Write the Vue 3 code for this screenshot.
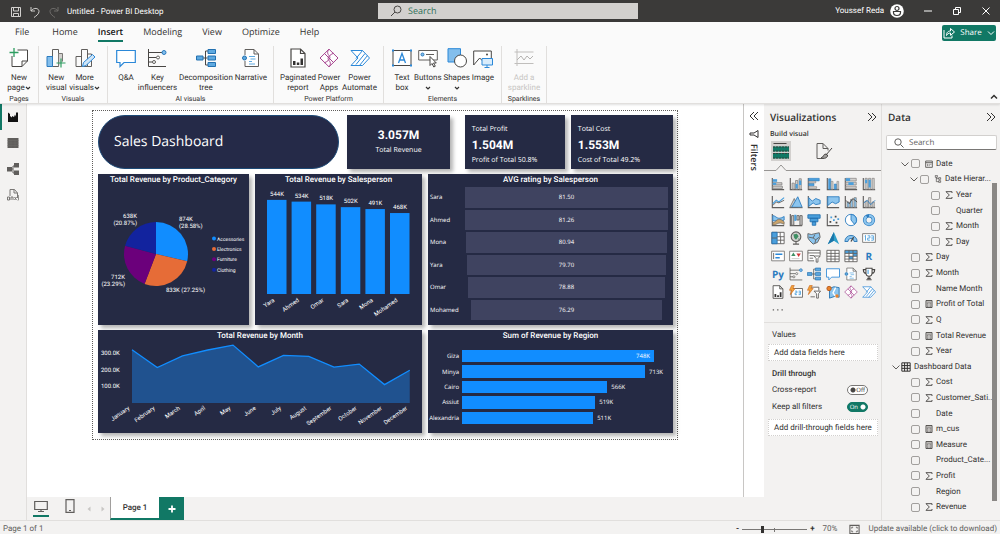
<script setup>
const tabs = ['File', 'Home', 'Insert', 'Modeling', 'View', 'Optimize', 'Help']

const glyph = {
  newPage: '<path d="M3 8v10.500h10l5.500-5.500V2H8.500M13 18.500V13h5.500" fill="#fff" stroke="#484644"/><path d="M5 0v9M.500 4.500h9" stroke="#2f9e62" stroke-width="1.300"/>',
  newVisual: '<path d="M6.500 18.500V1.500h6v17z" fill="#fafafa" stroke="#605e5c"/><path d="M12.500 18.500V5.500h4v8" fill="#d2d0ce" stroke="#797775"/><path d="M1 18.500V8.500h5.500v10z" fill="#83beec" stroke="#2b7bbf"/><path d="M15 10.500v9M10.500 15h9" stroke="#2f9e62" stroke-width="1.200"/>',
  moreVisuals: '<path d="M6.500 18.500V1.500h6v17zM12.500 18.500V6h4v12.500zM1 18.500V8.500h5.500v10z" fill="#fafafa" stroke="#605e5c"/><path d="M7.500 18.500l1-4L17.500 6.500l2.500 2.500-9 8.500z" fill="#cfe5f7" stroke="#2b88d8"/>',
  qa: '<path d="M.700 2.500h18.600v12H8L4 18.500v-4H.700z" fill="#fff" stroke="#2b88d8" stroke-width="1.200"/>',
  key: '<path d="M1.500 1v17.500H19M1.500 4.500H16M1.500 9.500h8M1.500 14h5" stroke="#484644" fill="none"/><circle cx="17" cy="4.500" r="2" fill="#83beec" stroke="#2b7bbf"/><circle cx="11" cy="9.500" r="1.500" fill="#fff" stroke="#605e5c"/><circle cx="7" cy="14" r="1.500" fill="#fff" stroke="#605e5c"/>',
  tree: '<path d="M7 10h4.500M9.500 3v14M9.500 3H12M9.500 17H12" stroke="#484644" fill="none"/><path d="M.500 8h6.500v4H.500zM12 1.500h7.500v4H12zM12 8h7.500v4H12zM12 14.500h7.500v4H12z" fill="#5ea9e0" stroke="#2371b0"/>',
  narrative: '<path d="M4 7V1.500h9l4.500 4.500v12.500H4V13M13 1.500V6h4.500" fill="#fff" stroke="#605e5c"/><path d="M8 8.500h6M9.500 11h5M8 13.500h3M8 16h6" stroke="#5ea9e0"/><circle cx="3.500" cy="10" r="2" fill="#5ea9e0" stroke="#2371b0"/>',
  paginated: '<path d="M3 1h9.500L17 5.500V19H3zM12.500 1v4.500H17" fill="#fff" stroke="#484644" stroke-width="1.200"/><path d="M5 13h2.500v4H5zM8.800 14.500h2.500V17H8.800zM12.500 10.500H15V17h-2.500z" fill="#323130"/>',
  apps: '<path d="M10 1.200L19 10l-9 8.800L1 10z" fill="#fff" stroke="#a6438f"/><path d="M10 1.200c-2.500 3-1 5.300 0 6.300s2.500 4-4.500 7.300M10 18.800c2.500-3 1-5.300 0-6.300s-2.500-4 4.500-7.300M5.500 5.500l9 9" fill="none" stroke="#a6438f"/>',
  automate: '<path d="M1 2.500h11.500L19.500 10l-7 7.500H1L8 10z" fill="#fff" stroke="#2b88d8"/><path d="M12.500 2.500L6 10.500M15 5.500l-9 11M17.500 7.500l-8 10" stroke="#2b88d8" fill="none"/>',
  textBox: '<path d="M1 2.500h18v15H1z" fill="#fff" stroke="#484644"/><path d="M6.500 15L10 5.500l3.500 9.500M7.700 12h4.600" stroke="#2b88d8" fill="none" stroke-width="1.300"/><path d="M0 1.500h2v2H0zM18 1.500h2v2h-2zM0 16.500h2v2H0zM18 16.500h2v2h-2z" fill="#2b88d8"/>',
  buttons: '<path d="M.700 2.500h18.600v9.500H.700z" fill="#fff" stroke="#605e5c"/><circle cx="4.500" cy="6.500" r="1.500" fill="#83beec" stroke="#2b7bbf"/><path d="M8 6.500h8" stroke="#605e5c"/><path d="M12 8.500v9l2-2 1.800 3.500 1.500-.800-1.800-3.200h2.800z" fill="#fff" stroke="#484644"/>',
  shapes: '<path d="M1 .700h12.500V14H1z" fill="#83beec" stroke="#2b88d8"/><circle cx="13.500" cy="13" r="6" fill="#fff" stroke="#484644"/>',
  image: '<path d="M.700 17V3h17.600v9" fill="#fff" stroke="#484644"/><path d="M.700 17l6-7 4 4" fill="none" stroke="#484644"/><circle cx="14" cy="6.500" r="1" fill="#484644"/><path d="M9 10.500h10.500v6.500H9z" fill="#d9ecfb" stroke="#2b88d8"/><path d="M14 17v2.500M11.500 19.500h5" stroke="#2b88d8"/>',
  sparkline: '<path d="M3 1v17M.500 4h19M.500 15.500h19" stroke="#c0bebc"/><path d="M3 12l4-4 3 4 3-4 3 3 3-3" stroke="#b5b3b1" fill="none"/>',
}

const ribbon = [
  { label: 'Pages', cls: 'g-pages', items: [{ icon: 'newPage', lines: ['New', 'page'], caret: true }] },
  { label: 'Visuals', cls: 'g-visuals', items: [{ icon: 'newVisual', lines: ['New', 'visual'] }, { icon: 'moreVisuals', lines: ['More', 'visuals'], caret: true }] },
  { label: 'AI visuals', cls: 'g-ai', items: [{ icon: 'qa', lines: ['Q&A'] }, { icon: 'key', lines: ['Key', 'influencers'] }, { icon: 'tree', lines: ['Decomposition', 'tree'] }, { icon: 'narrative', lines: ['Narrative'] }] },
  { label: 'Power Platform', cls: 'g-power', items: [{ icon: 'paginated', lines: ['Paginated', 'report'] }, { icon: 'apps', lines: ['Power', 'Apps'] }, { icon: 'automate', lines: ['Power', 'Automate'] }] },
  { label: 'Elements', cls: 'g-elements', items: [{ icon: 'textBox', lines: ['Text', 'box'] }, { icon: 'buttons', lines: ['Buttons', ''], caret: true }, { icon: 'shapes', lines: ['Shapes', ''], caret: true }, { icon: 'image', lines: ['Image'] }] },
  { label: 'Sparklines', cls: 'g-spark', items: [{ icon: 'sparkline', lines: ['Add a', 'sparkline'], disabled: true }] },
]

const axes = '<path d="M1.500 1v13.500H15" fill="none" stroke="#605e5c" stroke-width="1.300"/>'
const small = (body) => `<g transform="scale(.8)">${body}</g>`
const visuals = [
  ['Stacked bar chart', axes + '<path d="M2 2.500h5v3H2z" fill="#4a9fdc"/><path d="M4.500 6.500h8v2.500H2V6.500zM2 10.500h11v2.500H2z" fill="#d2d0ce" stroke="#797775" stroke-width=".8"/><path d="M2 6.500h4v2.500H2z" fill="#4a9fdc"/>'],
  ['Stacked column chart', axes + '<path d="M3.500 7h2.500v7H3.500zM7.500 4H10v10H7.500zM11.500 2H14v12h-2.500z" fill="#d2d0ce" stroke="#797775" stroke-width=".8"/><path d="M7.500 8H10v5H7.500zM11.500 4H14v5h-2.500z" fill="#4a9fdc"/>'],
  ['Clustered bar chart', axes + '<path d="M2 1.500h12v3H2zM2 7.500h6v2.500H2z" fill="#4a9fdc" stroke="#2b7bbf" stroke-width=".6"/><path d="M2 4.800h8v2H2zM2 11h9v2H2z" fill="#d2d0ce" stroke="#797775" stroke-width=".6"/>'],
  ['Clustered column chart', axes + '<path d="M3 2h2.500v12H3zM9.500 8H12v6H9.500z" fill="#4a9fdc" stroke="#2b7bbf" stroke-width=".6"/><path d="M5.800 5H8v9H5.800zM12.500 5h2v9h-2z" fill="#d2d0ce" stroke="#797775" stroke-width=".6"/>'],
  ['100% stacked bar chart', axes + '<path d="M2 1.500h12v3H2zM2 6h12v3H2zM2 10.500h12v2.500H2z" fill="#d2d0ce" stroke="#797775" stroke-width=".7"/><path d="M2 1.500h5v3H2zM5 6h6v3H5z" fill="#4a9fdc"/>'],
  ['100% stacked column chart', axes + '<path d="M3.500 1.500H6v12.500H3.500zM7.500 1.500H10v12.500H7.500zM11.500 1.500H14v12.500h-2.500z" fill="#d2d0ce" stroke="#797775" stroke-width=".7"/><path d="M3.500 3H6v4H3.500zM7.500 3H10v9H7.500z" fill="#4a9fdc"/>'],
  ['Line chart', axes + '<path d="M2 10l4-4 3 2 6-5" fill="none" stroke="#4a9fdc" stroke-width="1.300"/><path d="M2 12l4-4 3 1 6-3" fill="none" stroke="#605e5c"/>'],
  ['Area chart', '<path d="M1 14L6 4l4 10z" fill="#d2d0ce" stroke="#797775"/><path d="M3 14l7-12 5 12z" fill="#8cc5ee" stroke="#2b7bbf"/><path d="M.500 14.500h15" stroke="#605e5c"/>'],
  ['Stacked area chart', axes + '<path d="M2 3l4 4 4-3 5 2v4l-5 1-3-2-5 4z" fill="#8cc5ee" stroke="#2b7bbf"/>'],
  ['100% stacked area chart', axes + '<path d="M2 2h13v6l-4 2-4-2-5 4z" fill="#8cc5ee" stroke="#2b7bbf"/>'],
  ['Line and stacked column chart', axes + '<path d="M3.500 8H6v6H3.500zM7.500 5H10v9H7.500zM11.500 3H14v11h-2.500z" fill="#8cc5ee" stroke="#797775" stroke-width=".8"/><path d="M2 6l4 4 4-6 5 4" fill="none" stroke="#484644"/>'],
  ['Line and clustered column chart', axes + '<path d="M3.500 7H6v7H3.500zM7.500 3H10v11H7.500zM11.500 8H14v6h-2.500z" fill="#d2d0ce" stroke="#797775" stroke-width=".8"/><path d="M2 9l4-3 4 5 5-5" fill="none" stroke="#2b7bbf"/>'],
  ['Ribbon chart', axes + '<path d="M2 3c4 0 5 6 13 1v4c-6 4-8 0-13 1z" fill="#8cc5ee" stroke="#2b7bbf"/><path d="M2 11c4 0 5-8 13-1v3c-7-4-8 1-13 1z" fill="#c9a36b" stroke="#605e5c" stroke-width=".7"/>'],
  ['Waterfall chart', axes + '<path d="M3 3h2.500v11H3zM9 3h2.500v5H9zM12.500 3H15v11h-2.500z" fill="#d2d0ce" stroke="#605e5c"/><path d="M6 2h2.500v7H6z" fill="#4a9fdc"/>'],
  ['Funnel chart', '<path d="M1 2h14v4H1zM3.500 6h9v4h-9zM6 10h4v4H6z" fill="#4a9fdc" stroke="#2371b0"/>'],
  ['Scatter chart', axes + '<path d="M4 9h2v2H4zM10 3h2v2h-2zM11 10h2v2h-2z" fill="#484644"/><path d="M5 4h2v2H5zM8 7h2v2H8zM13 6h2v2h-2z" fill="#4a9fdc"/>'],
  ['Pie chart', '<circle cx="8" cy="8" r="6.500" fill="#fff" stroke="#2b7bbf"/><path d="M8 8V1.500A6.500 6.500 0 0 1 12 13z" fill="#8cc5ee" stroke="#2b7bbf"/>'],
  ['Donut chart', '<circle cx="8" cy="8" r="5" fill="none" stroke="#2b7bbf" stroke-width="4"/><circle cx="8" cy="8" r="5" fill="none" stroke="#8cc5ee" stroke-width="2.500" stroke-dasharray="20 3"/>'],
  ['Treemap', '<path d="M1 1.500h14v13H1z" fill="#fff" stroke="#605e5c"/><path d="M1 1.500h6v13H1z" fill="#4a9fdc" stroke="#2371b0"/><path d="M7 6.500h8M10.500 1.500v5M11 6.500v8M7 10.500h8M1 8h6" stroke="#605e5c"/>'],
  ['Map', '<circle cx="8" cy="6.500" r="5.500" fill="#d2d0ce" stroke="#605e5c" stroke-width="1.300"/><path d="M5 4l4-1 2 3-3 4-2-2zM10 9l2-1-1 2z" fill="#3f8f63"/><path d="M8 12v3M4.500 15h7" fill="none" stroke="#605e5c" stroke-width="1.300"/>'],
  ['Filled map', '<path d="M1 3l4 1 4-1 5-1 1 5-3 6-5 2-4-4-2-3z" fill="#8cc5ee" stroke="#605e5c"/><path d="M2 7l5 1 2-4M7 8l3 2 4-3M10 10l-1 4" fill="none" stroke="#605e5c"/>'],
  ['Azure map', '<path d="M9 1l6 14-6-4-7 4z" fill="#2f9fc9"/><path d="M9 1v10l-7 4z" fill="#1b75a8"/>'],
  ['Gauge', '<path d="M1 12a7 7 0 0 1 14 0h-3.500a3.500 3.500 0 0 0-7 0z" fill="#8cc5ee" stroke="#2371b0"/><path d="M8 12l3-5" stroke="#484644" stroke-width="1.500"/>'],
  ['Card', '<path d="M.700 3h14.600v10H.700z" fill="#fff" stroke="#797775"/><path d="M3 6l1-1v6M6.500 5.500h2.500V8H6.500v2.500H9M10.500 5.500H13v5h-2.500M10.500 8H13" stroke="#4a9fdc" fill="none"/>'],
  ['Multi-row card', '<path d="M.700 2.500h14.600v11H.700z" fill="#fff" stroke="#797775"/><path d="M3 4.500v7" stroke="#605e5c"/><path d="M5 6h8M5 10h5" stroke="#2b88d8" stroke-width="1.600"/>'],
  ['KPI', '<path d="M.700 2.500h14.600v11H.700z" fill="#fff" stroke="#797775"/><path d="M2.500 8l2.500-4 2.500 4z" fill="#3f8f63"/><path d="M8.500 5h5L11 9z" fill="#d13438"/><path d="M3 11h9" stroke="#c8c6c4"/>'],
  ['Slicer', '<path d="M8 13.500H1V1.500h14v6" fill="#fff" stroke="#605e5c"/><path d="M1 4.500h14M3 7.500h5M3 10.500h4" stroke="#605e5c"/><path d="M8 8h7l-2.500 3v4h-2v-4z" fill="#fff" stroke="#605e5c"/>'],
  ['Table', '<path d="M1 1.500h14v13H1zM1 5h14M1 8.300h14M1 11.500h14M5.700 1.500v13M10.300 1.500v13" fill="#fff" stroke="#605e5c"/>'],
  ['Matrix', '<path d="M1 1.500h14v13H1z" fill="#fff"/><path d="M1 1.500h14V5H1zM5.700 8.300h4.600v3H5.700zM10.300 5H15v3.300h-4.700z" fill="#4a9fdc"/><path d="M1 1.500h14v13H1zM1 5h14M1 8.300h14M1 11.500h14M5.700 1.500v13M10.300 1.500v13" fill="none" stroke="#605e5c"/>'],
  ['R script visual', '', 'R'],
  ['Python visual', '', 'Py'],
  ['Key influencers', small(glyph.key)],
  ['Decomposition tree', small(glyph.tree)],
  ['Q&A', small(glyph.qa)],
  ['Narrative', small(glyph.narrative)],
  ['Metrics', '<path d="M4.500 1.500h7v5a3.500 4 0 0 1-7 0zM4.500 3h-3c0 3 1 4 3.300 4.500M11.500 3h3c0 3-1 4-3.300 4.500M8 10v3M5 14.500h6M6 13h4" fill="#fff" stroke="#484644" stroke-width="1.200"/><path d="M6 3h2v5H6z" fill="#8cc5ee"/>'],
  ['Paginated report', small(glyph.paginated)],
  ['Card (new)', '<path d="M2.500 4h13v10h-13z" fill="#fff" stroke="#605e5c"/><path d="M7 7h2v2H7v2h2M11 7h2v4h-2M11 9h2" stroke="#4a9fdc" fill="none"/><path d="M3 .500L.500 6H3l-1.500 5L7 4H4.500L6 .500z" fill="#f2a33a" stroke="#c8641b" stroke-width=".7"/>'],
  ['Slicer (new)', '<path d="M4 2.500h9.500v4M4 13.500h5" fill="#fff" stroke="#605e5c"/><path d="M8 7h7.500l-2.500 3v5h-2v-5z" fill="#fff" stroke="#605e5c"/><path d="M3 .500L.500 6H3l-1.500 5L7 4H4.500L6 .500z" fill="#f2a33a" stroke="#c8641b" stroke-width=".7"/>'],
  ['ArcGIS Maps', '<path d="M4 4l5-2 6 1v11l-5-1-6 2z" fill="#8cc5ee" stroke="#2371b0"/><path d="M11 3l-3 6 4 5" stroke="#fff" stroke-width="1.500" fill="none"/><circle cx="3.500" cy="4" r="2.500" fill="#e8812b" stroke="#b4571b"/><circle cx="12.500" cy="12.500" r="2" fill="#e8812b"/>'],
  ['Power Apps', small(glyph.apps)],
  ['Power Automate', small(glyph.automate)],
]

const fields = [
  { name: 'Date', icon: 'cal', level: 'l1', open: true, check: true },
  { name: 'Date Hierar...', icon: 'hier', level: 'l2', open: true, check: true },
  { name: 'Year', icon: 'sum', level: 'l3', check: true },
  { name: 'Quarter', level: 'l3', check: true },
  { name: 'Month', icon: 'sum', level: 'l3', check: true },
  { name: 'Day', icon: 'sum', level: 'l3', check: true },
  { name: 'Day', icon: 'sum', level: 'l1', check: true },
  { name: 'Month', icon: 'sum', level: 'l1', check: true },
  { name: 'Name Month', level: 'l1', check: true },
  { name: 'Profit of Total', icon: 'calc', level: 'l1', check: true },
  { name: 'Q', icon: 'sum', level: 'l1', check: true },
  { name: 'Total Revenue', icon: 'calc', level: 'l1', check: true },
  { name: 'Year', icon: 'sum', level: 'l1', check: true },
  { name: 'Dashboard Data', icon: 'table', level: 'l0', open: true },
  { name: 'Cost', icon: 'sum', level: 'l1', check: true },
  { name: 'Customer_Sati...', icon: 'sum', level: 'l1', check: true },
  { name: 'Date', level: 'l1', check: true },
  { name: 'm_cus', icon: 'calc', level: 'l1', check: true },
  { name: 'Measure', icon: 'calc', level: 'l1', check: true },
  { name: 'Product_Cate...', level: 'l1', check: true },
  { name: 'Profit', icon: 'sum', level: 'l1', check: true },
  { name: 'Region', level: 'l1', check: true },
  { name: 'Revenue', icon: 'sum', level: 'l1', check: true },
]
const fieldGlyph = {
  sum: '<path d="M10.500 3V1H1.500l5 5-5 5h9V9" fill="none" stroke="#484644" stroke-width="1.400"/>',
  calc: '<path d="M1.500 .700h9v10.600h-9z" fill="#e1dfdd" stroke="#484644" stroke-width="1.400"/><path d="M3 3.200h6M3 5.500h1.500M5.300 5.500h1.500M7.600 5.500H9M3 7.500h1.500M5.300 7.500h1.500M7.600 7.500H9M3 9.500h1.500M5.300 9.500h1.500M7.600 9.500H9" stroke="#484644"/>',
  cal: '<path d="M1 1.500h10v9.500H1zM1 4h10" fill="none" stroke="#484644" stroke-width="1.200"/><path d="M3 6.500h1.500M5.500 6.500H7M8 6.500h1.500M3 8.500h1.500M5.500 8.500H7" stroke="#484644"/>',
  hier: '<path d="M2 .500h3v3H2zM7 4h3v2.500H7zM7 8.500h3V11H7zM3.500 3.500v6.500H7M3.500 5.500H7" fill="none" stroke="#484644"/>',
  table: '<path d="M1 1h10v10H1zM1 4.300h10M1 7.600h10M4.300 1v10M7.600 1v10" fill="none" stroke="#323130" stroke-width="1.200"/>',
}

const shares = [
  { name: 'Accessories', pct: 28.58, color: '#118dff' },
  { name: 'Electronics', pct: 27.25, color: '#e66c37' },
  { name: 'Furniture', pct: 23.29, color: '#6b007b' },
  { name: 'Clothing', pct: 20.87, color: '#12239e' },
]
let turn = 0
const slices = shares.map((s) => {
  const at = (p) => {
    const a = (p / 100) * Math.PI * 2
    return `${(58 + 32 * Math.sin(a)).toFixed(2)} ${(80 - 32 * Math.cos(a)).toFixed(2)}`
  }
  const from = at(turn)
  turn += s.pct
  return { color: s.color, d: `M58 80L${from}A32 32 0 0 1 ${at(turn)}Z` }
})

const people = [['Yara', 544], ['Ahmed', 534], ['Omar', 518], ['Sara', 502], ['Mona', 491], ['Mohamed', 468]]
const columns = people.map(([name, v], i) => {
  const h = v * 0.173
  return { name, v, x: 12 + i * 24.6, y: 120 - h, h }
})

const ratings = [['Sara', '81.50'], ['Ahmed', '81.26'], ['Mona', '80.94'], ['Yara', '79.70'], ['Omar', '78.88'], ['Mohamed', '76.29']]
const regions = [['Giza', 748], ['Minya', 713], ['Cairo', 566], ['Assiut', 519], ['Alexandria', 511]]

const months = [['January', 325], ['February', 216], ['March', 287], ['April', 323], ['May', 353], ['June', 220], ['July', 291], ['August', 285], ['September', 219], ['October', 237], ['November', 112], ['December', 200]]
const points = months.map(([name, v], i) => ({ name, x: 34 + i * 25.25, y: 73 - v * 0.164 }))
const line = points.map((p) => `${p.x},${p.y.toFixed(1)}`).join(' ')
</script>

<template>
  <div class="app">
    <header class="titlebar">
      <div class="quick">
        <svg class="i12" viewBox="0 0 12 12"><path d="M1.500 1.500h9v9h-9zM3.500 1.500v3.500h5V1.500M3.500 10.500v-3h5v3" fill="none" stroke="#d2d0ce" /></svg>
        <svg class="i12" viewBox="0 0 12 12"><path d="M2 1v4h4M2 5c3-4 8-3 8 .500C10 8 7 10 5 11.500" fill="none" stroke="#d2d0ce" /></svg>
        <svg class="i12" viewBox="0 0 12 12"><path d="M10 1v4H6M10 5C7 1 2 2 2 5.500 2 8 5 10 7 11.500" fill="none" stroke="#6f6d6b" /></svg>
        <span>Untitled - Power BI Desktop</span>
      </div>
      <label class="search top-search">
        <svg class="i12" viewBox="0 0 12 12"><circle cx="7.500" cy="4.500" r="3.500" fill="none" stroke="#484644" /><path d="M5 7L1 11" stroke="#484644" /></svg>
        <input type="text" placeholder="Search" aria-label="Search commands" />
      </label>
      <div class="account">
        <span>Youssef Reda</span>
        <svg class="avatar" viewBox="0 0 14 14"><circle cx="7" cy="7" r="6.800" fill="#fff" /><circle cx="7" cy="4.500" r="2" fill="none" stroke="#3b3a39" stroke-width="1.200" /><path d="M3.500 7.500h7v1a3.500 3 0 0 1-7 0z" fill="none" stroke="#3b3a39" stroke-width="1.200" /></svg>
        <button class="win" aria-label="Minimize"><svg viewBox="0 0 8 8"><path d="M0 4h8" stroke="#fff" /></svg></button>
        <button class="win" aria-label="Restore"><svg viewBox="0 0 8 8"><path d="M.500 2.500h5v5h-5zM2.500 2V.500h5v5H6" fill="none" stroke="#fff" /></svg></button>
        <button class="win" aria-label="Close"><svg viewBox="0 0 8 8"><path d="M.500.500l7 7M7.500.500l-7 7" stroke="#fff" /></svg></button>
      </div>
    </header>

    <div class="ribbon">
      <nav class="tabs">
        <button v-for="t in tabs" :key="t" class="tab" :class="{ active: t === 'Insert', file: t === 'File' }">{{ t }}</button>
        <button class="share">
          <svg class="i12" viewBox="0 0 12 12"><path d="M1 3v8h8V8.500M3.500 8.500C3.500 5 5.500 4 7.500 4V1.500L11.500 5 7.500 8.300V6C5.500 6 4.500 7 3.500 8.500z" fill="none" stroke="#fff" /></svg>
          Share
          <svg class="i8" viewBox="0 0 8 8"><path d="M1 2.500l3 3 3-3" fill="none" stroke="#fff" /></svg>
        </button>
      </nav>
      <div class="groups">
        <section v-for="g in ribbon" :key="g.label" class="group" :class="g.cls">
          <div class="tools">
            <button v-for="b in g.items" :key="b.icon" class="tool" :disabled="b.disabled">
              <svg class="i20" viewBox="0 0 20 20" fill="none" v-html="glyph[b.icon]"></svg>
              <span>{{ b.lines[0] }}</span>
              <span v-if="b.lines.length > 1">{{ b.lines[1] }}<svg v-if="b.caret" class="caret" viewBox="0 0 6 6"><path d="M1 2l2 2 2-2" fill="none" stroke="#323130" stroke-width="1.200" /></svg></span>
            </button>
          </div>
          <h3>{{ g.label }}</h3>
        </section>
        <button class="collapse" aria-label="Collapse ribbon"><svg class="i8" viewBox="0 0 8 8"><path d="M1 5.500l3-3 3 3" fill="none" stroke="#323130" stroke-width="1.500" /></svg></button>
      </div>
    </div>

    <div class="body">
      <nav class="rail">
        <button class="on" aria-label="Report view"><svg viewBox="0 0 12 12"><path d="M1 1.500l2 1.500v2l2 1.500V5l2 1 1-2.500 1 2V1.500h2V11H1z" fill="#111" /></svg></button>
        <button aria-label="Table view"><svg viewBox="0 0 12 12"><path d="M.500 1h11v10H.500z" fill="#605e5c" /><path d="M.500 3.500h11M.500 6h11M.500 8.500h11M4 3v8M8 3v8" stroke="#6f6d6b" stroke-width=".5" /></svg></button>
        <button aria-label="Model view"><svg viewBox="0 0 12 12"><path d="M0 4h5v4.500H0zM7 0h5v4.500H7zM7 7.500h5V12H7z" fill="#605e5c" /><path d="M5 6h1V3h2M6 6v4h2" fill="none" stroke="#605e5c" /></svg></button>
        <button aria-label="DAX query view"><svg viewBox="0 0 12 12"><path d="M3 7V.500h4.500L10.500 4v5M7 .500V4h3.500" fill="none" stroke="#797775" /><path d="M.500 8h2v3h-2zM4 11V8h2v3M7.500 8l2 3M9.500 8l-2 3M11 6c1 2 1 4 0 5.500" fill="none" stroke="#797775" /></svg></button>
      </nav>

      <main class="center">
        <div class="canvas">
          <div class="dash">
            <div class="row top">
              <h1 class="pill">Sales Dashboard</h1>
              <div class="card kpi k1"><b>3.057M</b><span>Total Revenue</span></div>
              <div class="card kpi k2"><span>Total Profit</span><b>1.504M</b><span>Profit of Total 50.8%</span></div>
              <div class="card kpi k3"><span>Total Cost</span><b>1.553M</b><span>Cost of Total 49.2%</span></div>
            </div>

            <div class="row">
              <section class="card w151">
                <h2>Total Revenue by Product_Category</h2>
                <svg class="chart" viewBox="0 12 151 139">
                  <path v-for="s in slices" :key="s.color" :d="s.d" :fill="s.color" />
                  <text x="39" y="44" class="end">638K</text><text x="39" y="51" class="end">(20.87%)</text>
                  <text x="81" y="47">874K</text><text x="81" y="54">(28.58%)</text>
                  <text x="27" y="105" class="end">712K</text><text x="27" y="112" class="end">(23.29%)</text>
                  <text x="68" y="118">833K (27.25%)</text>
                  <g v-for="(s, i) in shares" :key="s.name">
                    <circle cx="116" :cy="64.500 + i * 10.400" r="2" :fill="s.color" />
                    <text x="119" :y="66.500 + i * 10.400" class="legend">{{ s.name }}</text>
                  </g>
                </svg>
              </section>
              <section class="card w167">
                <h2>Total Revenue by Salesperson</h2>
                <svg class="chart" viewBox="0 12 167 139">
                  <g v-for="c in columns" :key="c.name">
                    <rect :x="c.x" :y="c.y" width="19.500" :height="c.h" fill="#118dff" />
                    <text :x="c.x + 10" :y="c.y - 4" class="mid">{{ c.v }}K</text>
                    <text class="end" :transform="`translate(${c.x + 8} 127) rotate(-35)`">{{ c.name }}</text>
                  </g>
                </svg>
              </section>
              <section class="card w245">
                <h2>AVG rating by Salesperson</h2>
                <ul class="funnel">
                  <li v-for="[name, v] in ratings" :key="name">
                    <span>{{ name }}</span>
                    <div class="lane"><div class="step" :style="{ width: (v / 81.5) * 100 + '%' }">{{ v }}</div></div>
                  </li>
                </ul>
              </section>
            </div>

            <div class="row">
              <section class="card w324">
                <h2>Total Revenue by Month</h2>
                <svg class="chart" viewBox="0 12 324 91">
                  <text x="3" y="25">300.0K</text><text x="3" y="42">200.0K</text><text x="3" y="58">100.0K</text>
                  <polygon :points="`34,73 ${line} ${points[11].x},73`" fill="#20528f" />
                  <polyline :points="line" fill="none" stroke="#118dff" stroke-width="1.300" />
                  <text v-for="p in points" :key="p.name" class="end" :transform="`translate(${p.x - 2} 79) rotate(-35)`">{{ p.name }}</text>
                </svg>
              </section>
              <section class="card w245">
                <h2>Sum of Revenue by Region</h2>
                <ul class="regions">
                  <li v-for="([name, v], i) in regions" :key="name">
                    <span class="rname">{{ name }}</span>
                    <div class="lane">
                      <div class="rbar" :style="{ width: (v / 748) * 91 + '%' }"><span v-if="i === 0">{{ v }}K</span></div>
                      <span v-if="i > 0">{{ v }}K</span>
                    </div>
                  </li>
                </ul>
              </section>
            </div>
          </div>
        </div>
      </main>

      <aside class="filters">
        <button aria-label="Expand filters"><svg class="i10" viewBox="0 0 10 10"><path d="M5 1L1 5l4 4M9 1L5 5l4 4" fill="none" stroke="#323130" /></svg></button>
        <svg class="i10" viewBox="0 0 10 10"><path d="M9 1.500v7L5 6H1V4h4z" fill="none" stroke="#323130" /></svg>
        <h2>Filters</h2>
      </aside>

      <footer class="pages">
        <button class="view on" aria-label="Desktop layout"><svg viewBox="0 0 14 14"><path d="M.700 2.500h12.600v8H.700zM4 12.500h6M7 10.500v2" fill="none" stroke="#605e5c" stroke-width="1.200" /></svg></button>
        <button class="view phone" aria-label="Mobile layout"><svg viewBox="0 0 14 14"><path d="M3 .700h8v12.600H3z" fill="none" stroke="#605e5c" stroke-width="1.200" /><path d="M6 11.500h2" stroke="#605e5c" /></svg></button>
        <button class="step-btn" aria-label="Previous page"><svg class="i8" viewBox="0 0 8 8"><path d="M5.500 1.500v5L2.500 4z" fill="#c8c6c4" /></svg></button>
        <button class="step-btn" aria-label="Next page"><svg class="i8" viewBox="0 0 8 8"><path d="M2.500 1.500v5l3-2.500z" fill="#c8c6c4" /></svg></button>
        <button class="page">Page 1</button>
        <button class="add" aria-label="New page"><svg class="i8" viewBox="0 0 8 8"><path d="M4 .500v7M.500 4h7" stroke="#fff" stroke-width="1.800" /></svg></button>
      </footer>

      <aside class="viz">
        <div class="head">
          <h2>Visualizations</h2>
          <button aria-label="Collapse visualizations"><svg class="i10" viewBox="0 0 10 10"><path d="M1 1l4 4-4 4M5 1l4 4-4 4" fill="none" stroke="#323130" /></svg></button>
        </div>
        <h3>Build visual</h3>
        <div class="modes">
          <button class="mode on" aria-label="Build visual"><svg viewBox="0 0 18 18"><path d="M1.500 1.500h13" stroke="#484644" /><path d="M1 4.500h16v5H1zM1 11h16v5.500H1z" fill="#117865" /><path d="M1 5h16M1 9h16M1 11.500h16M1 16h16" stroke="#33423d" stroke-dasharray="2 1" /></svg></button>
          <button class="mode" aria-label="Format visual"><svg viewBox="0 0 18 18"><path d="M9 16.500H2V1.500h6l5 5v2M8 1.500v5h5" fill="none" stroke="#605e5c" /><path d="M17 6l-6 7M11 12c-3 0-2 3-5 4 3 1 7 0 6.500-3z" fill="#a19f9d" stroke="#484644" /></svg></button>
        </div>
        <svg class="notch" viewBox="0 0 118 7" preserveAspectRatio="xMinYMid slice"><path d="M0 6.500h12l5-5.500 5 5.500h900" fill="none" stroke="#979593" /></svg>
        <div class="picker">
          <button v-for="[name, body, label] in visuals" :key="name" :aria-label="name">
            <b v-if="label">{{ label }}</b>
            <svg v-else viewBox="0 0 16 16" fill="none" v-html="body"></svg>
          </button>
          <button class="more" aria-label="Get more visuals"><svg viewBox="0 0 16 16"><path d="M2 7h1.500v1.500H2zM7 7h1.500v1.500H7zM12 7h1.500v1.500H12z" fill="#605e5c" /></svg></button>
        </div>
        <div class="wells">
          <h4>Values</h4>
          <div class="well">Add data fields here</div>
          <h4 class="drill">Drill through</h4>
          <label class="switch"><span>Cross-report</span><input type="checkbox" /><i>Off</i></label>
          <label class="switch"><span>Keep all filters</span><input type="checkbox" checked /><i>On</i></label>
          <div class="well">Add drill-through fields here</div>
        </div>
      </aside>

      <aside class="data">
        <div class="head">
          <h2>Data</h2>
          <button aria-label="Collapse data"><svg class="i10" viewBox="0 0 10 10"><path d="M1 1l4 4-4 4M5 1l4 4-4 4" fill="none" stroke="#323130" /></svg></button>
        </div>
        <label class="search data-search">
          <svg class="i10" viewBox="0 0 10 10"><circle cx="4" cy="4" r="3.200" fill="none" stroke="#605e5c" /><path d="M6.500 6.500L9.500 9.500" stroke="#605e5c" /></svg>
          <input type="text" placeholder="Search" aria-label="Search fields" />
        </label>
        <div class="tree">
          <ul>
            <li v-for="(f, i) in fields" :key="i" :class="f.level">
              <svg v-if="f.open" class="i8 chev" viewBox="0 0 8 8"><path d="M.500 2.500L4 6l3.500-3.500" fill="none" stroke="#605e5c" /></svg>
              <span v-else class="chev"></span>
              <input v-if="f.check" :id="'f' + i" type="checkbox" />
              <svg class="ficon" viewBox="0 0 12 12" v-html="fieldGlyph[f.icon] || ''"></svg>
              <label :for="f.check ? 'f' + i : undefined">{{ f.name }}</label>
            </li>
          </ul>
          <div class="scroll"></div>
        </div>
      </aside>
    </div>

    <footer class="status">
      <span>Page 1 of 1</span>
      <span class="zoom">
        <b>-</b>
        <input type="range" min="0" max="100" value="31" aria-label="Zoom" />
        <b>+</b>
      </span>
      <span class="pct">70%</span>
      <svg class="fit" viewBox="0 0 12 12"><path d="M1 1.500h10v9H1z" fill="none" stroke="#605e5c" stroke-width="1.200" /><path d="M3 5V3.500h1.500M7.500 3.500H9V5M9 7v1.500H7.500M4.500 8.500H3V7" fill="none" stroke="#605e5c" /></svg>
      <a href="#">Update available (click to download)</a>
    </footer>
  </div>
</template>

<style>
body { margin: 0; }
</style>

<style scoped>
.app { display: flex; flex-direction: column; min-height: 100vh; font: 8px/10px Roboto, "Open Sans", sans-serif; color: #323130; background: #f3f2f1; text-rendering: geometricPrecision; }
* { box-sizing: border-box; }
h1, h2, h3, h4, ul { margin: 0; padding: 0; font-weight: 400; }
li { list-style: none; }
svg { display: block; flex: none; }
button { border: 0; padding: 0; background: none; font: inherit; color: inherit; text-rendering: inherit; display: flex; align-items: center; justify-content: center; white-space: nowrap; }
input { font: inherit; color: inherit; margin: 0; text-rendering: inherit; }
.i8 { width: 8px; height: 8px; }
.i10 { width: 10px; height: 10px; }
.i12 { width: 12px; height: 12px; }
.i20 { width: 20px; height: 20px; }

.titlebar { height: 22px; background: #3b3a39; color: #fff; display: grid; grid-template-columns: 378fr 260fr 362fr; align-items: center; }
.quick { display: flex; align-items: center; gap: 7px; padding: 2px 0 0 10px; }
.search { display: flex; align-items: center; }
.search input { border: 0; background: none; outline: 0; width: 100%; min-width: 0; padding: 0; }
.top-search { height: 16px; background: #d2d0ce; padding-left: 12px; gap: 6px; font: 9px/10px "Open Sans", sans-serif; }
.top-search input::placeholder { color: #31705a; opacity: 1; }
.account { display: flex; align-items: center; justify-content: flex-end; padding-right: 10px; }
.avatar { width: 14px; height: 14px; margin: 0 20px 0 6px; }
.win svg { width: 8px; height: 8px; }
.win + .win { margin-left: 21px; }

.ribbon { background: #fafafa; border-bottom: 1px solid #e1dfdd; box-shadow: 0 1px 2px rgba(0, 0, 0, .12); position: relative; }
.tabs { display: flex; align-items: center; height: 22px; padding: 0 4px 0 15px; gap: 20px; font: 9px/12px "Open Sans", sans-serif; }
.tab { height: 18px; padding-bottom: 1px; border-bottom: 2px solid transparent; }
.tab.file { margin-right: 3px; }
.tab.active { font-weight: 600; color: #111; border-color: #117865; }
.share { margin-left: auto; height: 16px; width: 54px; gap: 5px; border-radius: 2px; background: #117865; color: #fff; font-size: 8px; }
.groups { display: flex; height: 59px; padding-top: 2px; }
.group { display: flex; flex-direction: column; border-right: 1px solid #e1dfdd; }
.group h3 { text-align: center; font-size: 7px; line-height: 8px; white-space: nowrap; }
.tools { flex: 1; display: flex; justify-content: space-between; align-items: flex-start; }
.tool { flex-direction: column; padding-top: 2px; }
.tool span { display: flex; align-items: center; min-height: 10px; }
.tool .i20 { margin-bottom: 5px; }
.tool:disabled { color: #c8c6c4; }
.caret { width: 6px; height: 6px; }
.g-pages { width: 39px; }
.g-pages .tools, .g-spark .tools { justify-content: center; }
.g-visuals { width: 69px; }
.g-visuals .tools { padding: 0 7px; }
.g-ai { width: 166px; }
.g-ai .tools { padding: 0 6px 0 8px; }
.g-power { width: 110px; }
.g-power .tools { padding: 0 6px; }
.g-elements { width: 118px; }
.g-elements .tools { padding: 0 7px 0 8px; }
.g-spark { width: 45px; }
.collapse { margin: auto 2px 2px auto; }

.body { flex: 1; display: grid; grid-template: 1fr 23px / 27px 1fr 21px 118px 118px; min-height: 0; }
.rail { grid-row: 1 / 3; border-right: 1px solid #e1dfdd; }
.rail button { width: 100%; height: 26px; border-left: 2px solid transparent; border-right: 2px solid transparent; }
.rail .on { border-left-color: #117865; }
.rail svg { width: 12px; height: 12px; }
.center { background: #fff; padding: 6px 65px; min-width: 0; }
.dash { aspect-ratio: 586 / 330; border: 1px dotted #605e5c; padding: 4px 4px 6px 5px; display: grid; grid-template-rows: 54fr 151fr 103fr; gap: 5px; }
.row { display: flex; gap: 6px; min-height: 0; }
.row.top { display: grid; grid-template-columns: 243fr 111fr 100fr 102fr; }
.pill { margin-right: 2px; border: 1px solid #1d4a77; border-radius: 27px; background: #252a48; color: #fff; font: 14px/18px "Open Sans", sans-serif; display: flex; align-items: center; padding-left: 15px; }
.card { background: #252a44; color: #fff; box-shadow: 3px 3px 4px rgba(0, 0, 0, .3); min-width: 0; display: flex; flex-direction: column; }
.kpi { justify-content: center; }
.kpi b { font: 700 12px/16px Roboto, sans-serif; }
.kpi span { font: 7px/15px "Open Sans", sans-serif; white-space: nowrap; }
.k1 { align-items: center; margin-right: 9px; }
.k2, .k3 { padding: 5px 0 0 7px; }
.w151 { flex: 151; }
.w167 { flex: 167; }
.w245 { flex: 245; }
.w324 { flex: 324; }
.card h2 { font: 500 8px/12px Roboto, sans-serif; text-align: center; white-space: nowrap; }
.chart { flex: 1; width: 100%; min-height: 0; }
.chart text { font: 6px Roboto, sans-serif; fill: #fff; }
.chart .legend { font-size: 5px; }
.chart .end { text-anchor: end; }
.chart .mid { text-anchor: middle; }
.funnel, .regions { flex: 1; display: flex; flex-direction: column; font: 6px/8px "Open Sans", sans-serif; }
.funnel { gap: 2px; padding: 1px 5px 5px 2px; }
.funnel li, .regions li { flex: 1; display: flex; align-items: center; }
.funnel li > span { width: 35px; }
.funnel .lane { flex: 1; align-self: stretch; display: flex; justify-content: center; }
.step { background: #3f4360; display: flex; align-items: center; justify-content: center; }
.regions { gap: 3px; padding: 8px 0 9px; }
.rname { width: 34px; padding-right: 3px; text-align: right; }
.regions .lane { flex: 1; align-self: stretch; display: flex; align-items: center; gap: 4px; }
.rbar { height: 100%; background: #118dff; display: flex; align-items: center; justify-content: flex-end; padding-right: 4px; }

.filters { background: #fff; border-left: 1px solid #c8c6c4; display: flex; flex-direction: column; align-items: center; padding-top: 7px; }
.filters > svg { margin: 8px 0 5px; }
.filters h2 { writing-mode: vertical-rl; font: 600 9px/12px "Open Sans", sans-serif; }

.pages { grid-column: 2 / 4; grid-row: 2; display: flex; align-items: stretch; padding-left: 6px; }
.view { width: 16px; border-bottom: 2px solid transparent; margin: 0 13px 3px 0; }
.view.on { border-color: #117865; }
.view.phone { margin-right: 4px; }
.view svg { width: 14px; height: 14px; }
.step-btn { width: 14px; }
.page { width: 49px; background: #fff; border-bottom: 2px solid #117865; border-left: 1px solid #a19f9d; font-weight: 500; font-size: 8px; }
.add { width: 25px; background: #117865; }

.viz, .data { grid-row: 1 / 3; min-width: 0; }
.viz { grid-column: 4; display: flex; flex-direction: column; border-right: 1px solid #e1dfdd; }
.data { grid-column: 5; display: flex; flex-direction: column; }
.head { display: flex; align-items: center; justify-content: space-between; height: 26px; padding: 0 4px 0 6px; flex: none; }
.head h2 { font: 600 10px/12px "Open Sans", sans-serif; }
.viz > h3 { padding-left: 6px; font: 600 7px/10px "Open Sans", sans-serif; }
.modes { display: flex; gap: 23px; padding: 1px 0 0 7px; }
.mode { width: 20px; height: 20px; }
.mode.on { background: #d2d0ce; }
.mode svg { width: 18px; height: 18px; }
.notch { width: 100%; height: 7px; margin: 3px 0 4px; }
.picker { display: grid; grid-template-columns: repeat(6, 1fr); padding: 0 3px 3px 5px; border-bottom: 1px solid #e1dfdd; }
.picker button { height: 18px; }
.picker svg { width: 14px; height: 14px; }
.picker b { font: 700 10px/12px "Open Sans", sans-serif; color: #2b7bbf; }
.wells { padding: 7px 3px 7px 4px; }
.wells h4 { padding: 0 4px; font-weight: 400; }
.well { background: #fff; border: 1px dotted #d2d0ce; height: 17px; line-height: 15px; padding-left: 5px; margin-top: 4px; white-space: nowrap; }
.wells .drill { margin: 8px 0 2px; font-weight: 500; }
.switch { display: flex; align-items: center; justify-content: space-between; height: 17px; padding: 0 10px 0 4px; position: relative; }
.switch input { appearance: none; width: 21px; height: 10px; border: 1px solid #797775; border-radius: 5px; background: #fff radial-gradient(circle at 5px 4px, #484644 2px, transparent 3px); }
.switch input:checked { border-color: #117865; background: #117865 radial-gradient(circle at 15px 4px, #fff 2px, transparent 3px); }
.switch i { position: absolute; right: 13px; font: 6px/10px "Open Sans", sans-serif; pointer-events: none; }
.switch input:checked + i { right: 20px; color: #fff; }
.data-search { height: 15px; margin: 5px 3px 6px 4px; padding-left: 7px; gap: 5px; background: #fff; border: 1px solid #d2d0ce; border-bottom-color: #797775; border-radius: 2px; flex: none; font: 8px/10px "Open Sans", sans-serif; }
.data-search input::placeholder { color: #605e5c; opacity: 1; }
.tree { flex: 1; display: flex; padding-bottom: 5px; }
.tree ul { flex: 1; min-width: 0; display: flex; flex-direction: column; }
.tree li { flex: 1; display: flex; align-items: center; white-space: nowrap; }
.chev { width: 8px; flex: none; }
.l0 { padding-left: 10px; }
.l1 { padding-left: 19px; }
.l2 { padding-left: 28px; }
.l3 { padding-left: 39px; }
.tree input { appearance: none; width: 9px; height: 9px; border: 1px solid #a19f9d; border-radius: 2px; margin: 0 5px 0 2px; flex: none; }
.ficon { width: 8px; height: 8px; margin-right: 3px; }
.l0 .ficon { width: 10px; height: 10px; margin-left: 1px; }
.scroll { width: 5px; background: #8a8886; margin: 27px 3px 14px 0; }

.status { height: 14px; display: flex; align-items: center; border-top: 1px solid #e1dfdd; padding: 3px 3px 0 3px; color: #605e5c; white-space: nowrap; }
.zoom { margin-left: auto; display: flex; align-items: center; gap: 3px; }
.zoom b { color: #323130; }
.zoom input { appearance: none; width: 65px; height: 9px; background: linear-gradient(#797775, #797775) 0 4px / 100% 1px no-repeat, linear-gradient(#797775, #797775) 50% 3px / 1px 4px no-repeat; }
.zoom input::-webkit-slider-thumb { appearance: none; width: 3px; height: 7px; background: #323130; }
.pct { margin: 0 12px 0 8px; }
.fit { width: 11px; height: 11px; margin-right: 8px; }
.status a { color: inherit; text-decoration: none; }
</style>
